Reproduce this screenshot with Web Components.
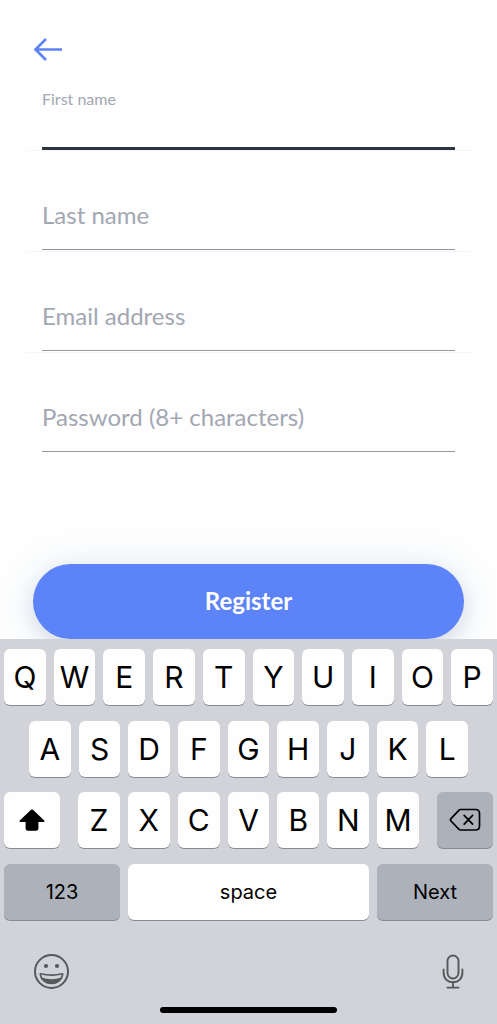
<!DOCTYPE html>
<html lang="en">
<head>
<meta charset="utf-8">
<meta name="viewport" content="width=device-width, initial-scale=1">
<title>Register</title>
<style>
  html, body { margin: 0; background: #fefefe; }
</style>
</head>
<body>
<register-screen></register-screen>
<script>
const define = (name, html, setup) => {
  const template = document.createElement('template');
  template.innerHTML = html;
  customElements.define(name, class extends HTMLElement {
    constructor() {
      super();
      this.attachShadow({ mode: 'open' }).append(template.content.cloneNode(true));
    }
    connectedCallback() { if (setup) setup(this, this.shadowRoot); }
  });
};

define('back-button', `
  <style>
    :host { display: block; }
    button { display: block; padding: 0; border: 0; background: none; cursor: pointer; }
    svg { display: block; }
  </style>
  <button type="button" aria-label="Back">
    <svg width="30" height="24" viewBox="0 0 30 24" fill="none" stroke="#5b82f7" stroke-width="2.6">
      <path d="M29 11.5H3M13 1 2.5 11.5 13 22"/>
    </svg>
  </button>`);

define('text-field', `
  <style>
    :host { display: block; padding: 0 16px 1px; border-bottom: 1px solid #f4f5fa; }
    :host([last]) { border-bottom-color: transparent; }
    :host([active]) { padding-bottom: 0; }
    .field { display: grid; height: 99px; }
    label, input { grid-area: 1 / 1; font-family: Lato, sans-serif; font-size: 24px; }
    label { align-self: end; line-height: 30px; padding-bottom: 20px; color: #a3a7b2; pointer-events: none; }
    input { min-width: 0; height: 50px; align-self: end; box-sizing: border-box; padding: 0; border: 0;
      border-bottom: 1px solid #94969f; border-radius: 0; outline: 0; background: none; color: #2d323c; }
    :host([active]) .field { height: 60px; }
    :host([active]) label { align-self: start; font-size: 16px; line-height: 18px; padding: 0; }
    :host([active]) input { border-bottom: 3px solid #2d343e; }
  </style>
  <div class="field"><label for="input"><slot></slot></label><input id="input"></div>`,
  (host, root) => { root.querySelector('input').type = host.getAttribute('type') || 'text'; });

define('primary-button', `
  <style>
    :host { display: block; }
    button { display: block; width: 100%; height: 75px; padding: 0 0 2px; border: 0; border-radius: 38px;
      background: #5c83f7; color: #fff; font: 700 24px/30px Lato, sans-serif; cursor: pointer;
      box-shadow: 0 4px 36px rgba(70, 130, 190, .2), 0 8px 16px rgba(70, 80, 90, .1); }
  </style>
  <button type="submit"><slot></slot></button>`);

define('key-cap', `
  <style>
    :host { display: block; flex: 1 1 0; min-width: 0; }
    :host([wide]) { flex: 0 0 56px; }
    :host([side]) { flex: 0 0 116px; }
    button { display: flex; align-items: center; justify-content: center; width: 100%; height: 56px;
      padding: 0; border: 0; border-radius: 6px; background: #fefefe; color: #000;
      box-shadow: 0 1px 0 #898b90; font: 400 30px/36px Inter, sans-serif; }
    :host([dark]) button { background: #acb1ba; }
    :host([word]) button { font-size: 20px; }
  </style>
  <button type="button"><slot></slot></button>`,
  (host, root) => {
    const name = host.getAttribute('name');
    if (name) root.querySelector('button').setAttribute('aria-label', name);
  });

define('key-row', `
  <style>
    :host { display: flex; gap: 8px; }
    :host([inset]) { padding: 0 25px; }
    :host([split]) { gap: 18px; }
  </style>
  <slot></slot>`);

define('icon-button', `
  <style>
    :host { display: block; }
    button { display: block; padding: 0; border: 0; background: none; }
    ::slotted(svg) { display: block; }
  </style>
  <button type="button"><slot></slot></button>`,
  (host, root) => root.querySelector('button').setAttribute('aria-label', host.getAttribute('name')));

define('screen-keyboard', `
  <style>
    :host { display: block; padding: 10px 4px 11px; background: #d1d3d9; }
    .rows { display: flex; flex-direction: column; justify-content: space-between; min-height: 271px; }
    .r3 { flex: 1; }
    .tools { display: flex; justify-content: space-between; align-items: center; padding: 33px 29px 0; }
    .home { width: 177px; height: 6px; margin: 17px auto 0; border-radius: 3px; background: #000; }
  </style>
  <div class="rows">
    <key-row class="r1"></key-row>
    <key-row class="r2" inset></key-row>
    <key-row split>
      <key-cap wide name="Shift"><svg width="26" height="22" viewBox="0 0 26 22"><path d="M12 .8Q13 0 14 .8L25.2 11.4Q26.2 13 24.4 13H19.4V19.4Q19.4 21.8 17 21.8H9Q6.6 21.8 6.6 19.4V13H1.6Q-.2 13 .8 11.4Z"/></svg></key-cap>
      <key-row class="r3"></key-row>
      <key-cap wide dark name="Delete"><svg width="32" height="24" viewBox="0 0 32 24" fill="none" stroke="#000" stroke-width="1.7" stroke-linejoin="round" stroke-linecap="round"><path d="M11.5 1.5H26.5Q30.5 1.5 30.5 5.5V18Q30.5 22 26.5 22H11.5Q10.5 22 9.8 21.2L2 13Q.9 11.8 2 10.6L9.8 2.3Q10.5 1.5 11.5 1.5ZM15.2 7.4 23.6 16.2M23.6 7.4 15.2 16.2"/></svg></key-cap>
    </key-row>
    <key-row>
      <key-cap side dark word>123</key-cap>
      <key-cap word>space</key-cap>
      <key-cap side dark word>Next</key-cap>
    </key-row>
  </div>
  <div class="tools">
    <icon-button name="Emoji"><svg width="37" height="37" viewBox="0 0 37 37" fill="none" stroke="#56585b" stroke-width="2">
      <circle cx="18.5" cy="18.5" r="16.5"/>
      <circle cx="13" cy="13" r="2.1" fill="#56585b" stroke="none"/><circle cx="24" cy="13" r="2.1" fill="#56585b" stroke="none"/>
      <path d="M7.8 20.8Q18.5 23.6 29.2 20.8Q29.8 20.6 29.7 21.4C28.8 27.2 24 30.4 18.5 30.4S8.2 27.2 7.3 21.4Q7.2 20.6 7.8 20.8Z" stroke-width="1.7"/>
      <path d="M8.6 24.4Q18.5 28 28.4 24.4C26.6 28.8 22.8 30.6 18.5 30.6S10.4 28.8 8.6 24.4Z" fill="#56585b" stroke="none"/></svg></icon-button>
    <icon-button name="Dictate"><svg width="22" height="36" viewBox="0 0 22 36" fill="none" stroke="#56585b" stroke-width="1.9" stroke-linecap="round">
      <rect x="5.5" y="1.5" width="11" height="23" rx="5.5"/><path d="M1.6 15.5V18.4C1.6 24.4 5.4 28.2 11 28.2S20.4 24.4 20.4 18.4V15.5M11 28.2V33.4M5.4 33.6H16.6"/></svg></icon-button>
  </div>
  <div class="home"></div>`,
  (host, root) => {
    const fill = (selector, letters) => {
      root.querySelector(selector).replaceChildren(...[...letters].map(letter => {
        const key = document.createElement('key-cap');
        key.textContent = letter;
        return key;
      }));
    };
    fill('.r1', 'QWERTYUIOP');
    fill('.r2', 'ASDFGHJKL');
    fill('.r3', 'ZXCVBNM');
  });

define('register-screen', `
  <style>
    :host { display: flex; flex-direction: column; min-height: 100vh; }
    main { flex: 1; padding-top: 38px; }
    back-button { padding-left: 33px; }
    form { margin: 0; }
    .fields { padding: 28px 26px 0; }
    primary-button { margin: 110px 33px 0; }
    screen-keyboard { position: relative; }
  </style>
  <main>
    <back-button></back-button>
    <form>
      <div class="fields">
        <text-field active>First name</text-field>
        <text-field>Last name</text-field>
        <text-field type="email">Email address</text-field>
        <text-field type="password" last>Password (8+ characters)</text-field>
      </div>
      <primary-button>Register</primary-button>
    </form>
  </main>
  <screen-keyboard></screen-keyboard>`);
</script>
</body>
</html>
